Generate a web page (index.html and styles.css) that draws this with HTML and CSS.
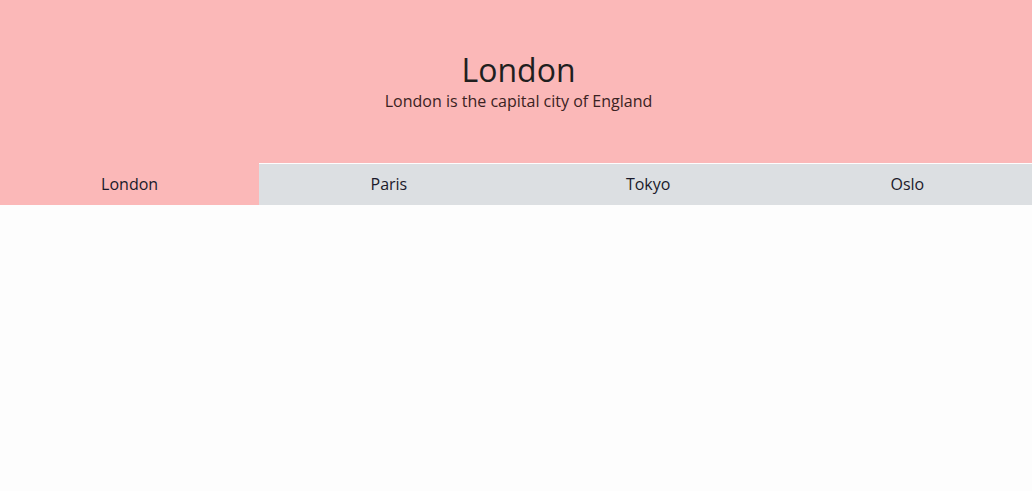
FILE: index.html
```html
<!DOCTYPE html>
<html>
<head>
<meta charset="utf-8">
<link rel="stylesheet" href="styles.css">
</head>
<body>
<header class="hero">
  <h1 class="hero-title">London</h1>
  <p class="hero-sub">London is the capital city of England</p>
</header>
<nav class="tabs">
  <div class="tab tab-active">London</div>
  <div class="tab">Paris</div>
  <div class="tab">Tokyo</div>
  <div class="tab">Oslo</div>
</nav>
</body>
</html>
```
FILE: styles.css
```css
html, body {
  margin: 0;
  padding: 0;
  background: #fdfdfd;
  font-family: "Open Sans", sans-serif;
  color: #222;
}
.hero {
  background: #fbb8b8;
  height: 163px;
  box-sizing: border-box;
  padding-top: 50px;
  padding-left: 5px;
  text-align: center;
}
.hero-title {
  margin: 0;
  font-size: 32px;
  font-weight: 400;
  line-height: 40px;
  color: #1f1f1f;
}
.hero-sub {
  margin: 0;
  font-size: 16px;
  line-height: 22px;
  color: #3a2222;
}
.tabs {
  display: flex;
  overflow: hidden;
  background: #fbb8b8;
}
.tab {
  flex: 0 0 259.25px;
  height: 42px;
  line-height: 40px;
  text-align: center;
  font-size: 16px;
  background: #dcdfe2;
  border-top: 1px solid #fdfdfd;
  box-sizing: border-box;
  color: #1a1a2a;
}
.tab-active {
  background: #fbb8b8;
  border-top-color: #fbb8b8;
}
```
